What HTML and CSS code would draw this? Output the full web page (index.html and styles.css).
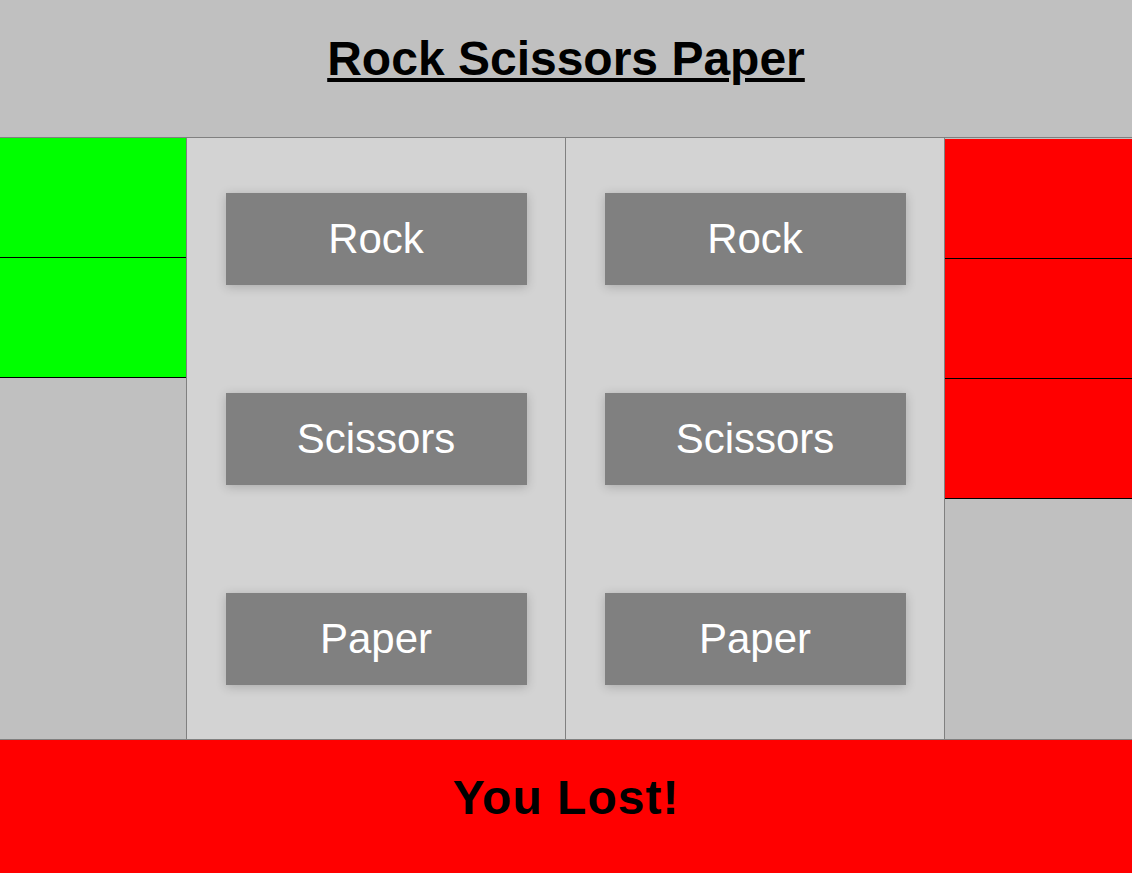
FILE: index.html
```html
<!DOCTYPE html>
<html>
<head>
<meta charset="utf-8">
<title>Rock Scissors Paper</title>
<link rel="stylesheet" href="styles.css">
</head>
<body>
<header class="top">
  <h1 class="title">Rock Scissors Paper</h1>
</header>
<main class="board">
  <div class="score score-left">
    <div class="cell win"></div>
    <div class="cell win"></div>
  </div>
  <div class="panel">
    <div class="choice">Rock</div>
    <div class="choice">Scissors</div>
    <div class="choice">Paper</div>
  </div>
  <div class="panel">
    <div class="choice">Rock</div>
    <div class="choice">Scissors</div>
    <div class="choice">Paper</div>
  </div>
  <div class="score score-right">
    <div class="cell lose"></div>
    <div class="cell lose"></div>
    <div class="cell lose"></div>
  </div>
</main>
<footer class="result">
  <h2 class="result-text">You Lost!</h2>
</footer>
</body>
</html>
```
FILE: styles.css
```css
html, body {
  margin: 0;
  padding: 0;
}
body {
  font-family: "Liberation Sans", Arial, sans-serif;
  background: #c0c0c0;
}
.top {
  height: 137px;
  background: #c0c0c0;
  text-align: center;
  box-sizing: border-box;
  padding-top: 31px;
}
.title {
  margin: 0;
  font-size: 48px;
  font-weight: bold;
  text-decoration: underline;
  color: #000;
}
.board {
  display: grid;
  grid-template-columns: 186px 379px 379px 188px;
  height: 603px;
  box-sizing: border-box;
  border-top: 1px solid #808080;
  border-bottom: 1px solid #808080;
  background: #c0c0c0;
}
.score {
  display: flex;
  flex-direction: column;
  background: #c0c0c0;
}
.score-right {
  border-left: 1px solid #808080;
  padding-top: 1px;
}
.cell {
  height: 119px;
  border-bottom: 1px solid #000;
}
.win { background: #00ff00; }
.lose { background: #ff0000; }
.panel {
  background: #d3d3d3;
  border-left: 1px solid #808080;
  padding-top: 1px;
  display: flex;
  flex-direction: column;
  justify-content: space-around;
  align-items: center;
}
.choice {
  width: 301px;
  height: 92px;
  background: #808080;
  color: #fff;
  font-size: 42px;
  display: flex;
  align-items: center;
  justify-content: center;
  box-shadow: 0 2px 10px rgba(0, 0, 0, 0.2);
}
.result {
  background: #ff0000;
  height: 160px;
  text-align: center;
  box-sizing: border-box;
  padding-top: 30px;
}
.result-text {
  margin: 0;
  font-size: 48px;
  font-weight: bold;
  letter-spacing: 1px;
  color: #000;
}
```
